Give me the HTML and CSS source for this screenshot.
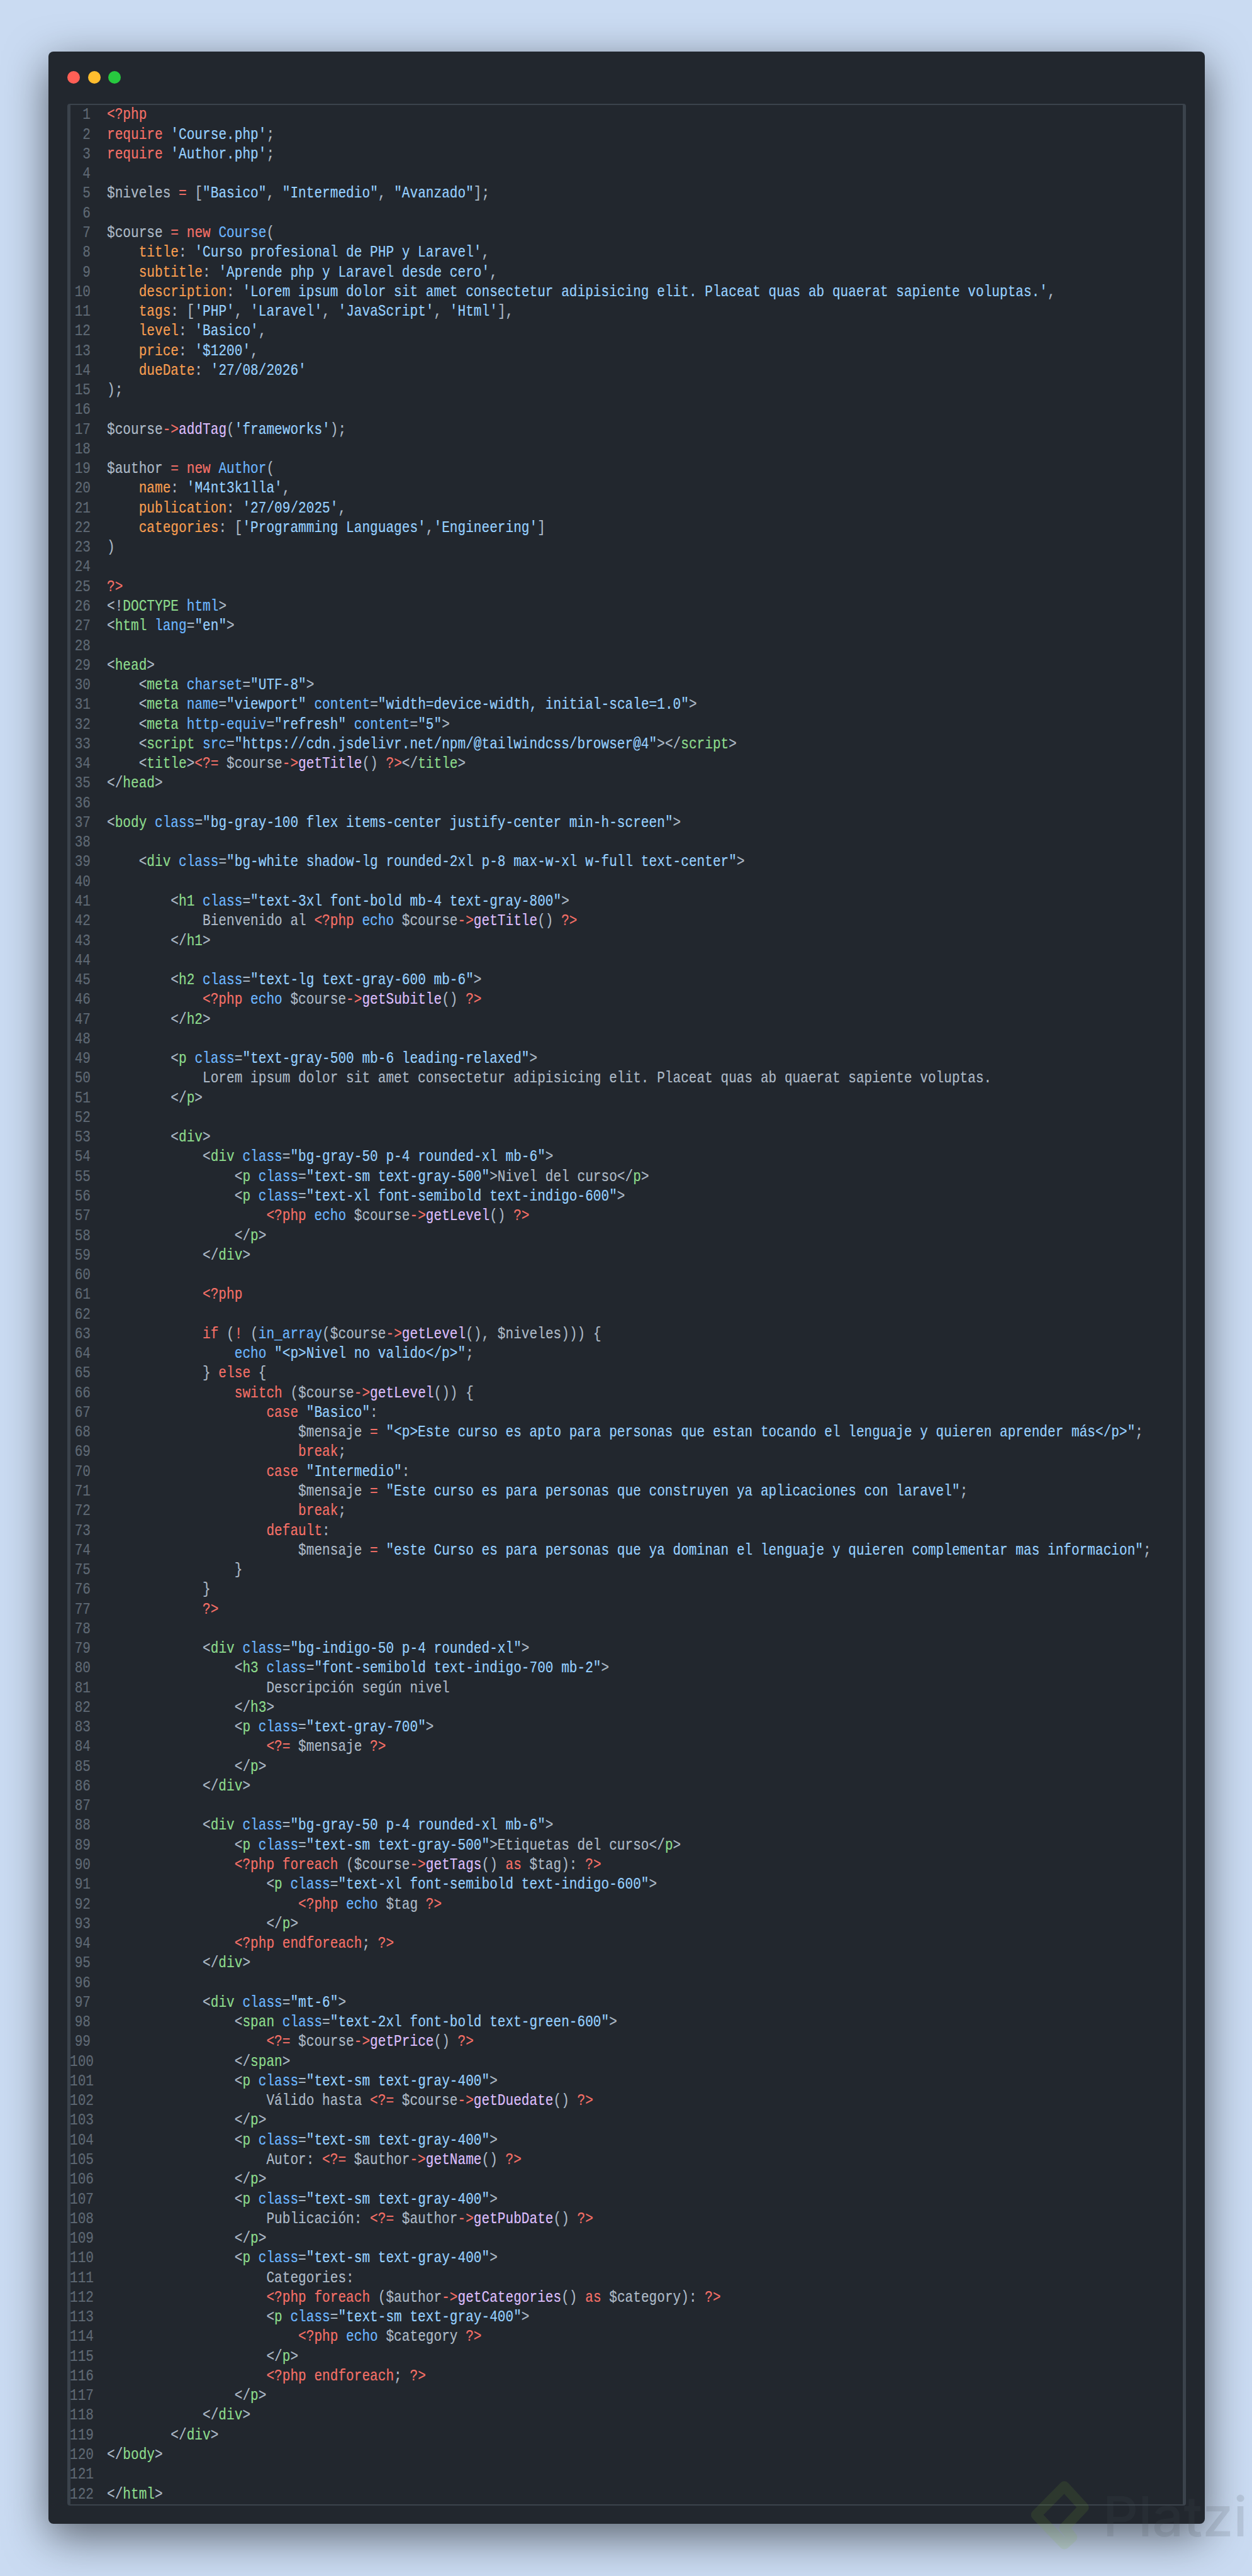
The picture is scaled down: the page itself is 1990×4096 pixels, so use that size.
FILE: index.html
```html
<!DOCTYPE html>
<html lang="es">
<head>
<meta charset="utf-8">
<title>Course PHP</title>
<link rel="stylesheet" href="styles.css">
</head>
<body>
<main class="window">
  <div class="controls"><span class="dot red"></span><span class="dot yellow"></span><span class="dot green"></span></div>
  <div class="editor">
<div class="line"><span class="num">1</span><span class="code"><b class="k">&lt;?php</b></span></div>
<div class="line"><span class="num">2</span><span class="code"><b class="k">require</b> <b class="s">'Course.php'</b>;</span></div>
<div class="line"><span class="num">3</span><span class="code"><b class="k">require</b> <b class="s">'Author.php'</b>;</span></div>
<div class="line"><span class="num">4</span><span class="code"></span></div>
<div class="line"><span class="num">5</span><span class="code">$niveles <b class="k">=</b> [<b class="s">"Basico"</b>, <b class="s">"Intermedio"</b>, <b class="s">"Avanzado"</b>];</span></div>
<div class="line"><span class="num">6</span><span class="code"></span></div>
<div class="line"><span class="num">7</span><span class="code">$course <b class="k">=</b> <b class="k">new</b> <b class="e">Course</b>(</span></div>
<div class="line"><span class="num">8</span><span class="code">    <b class="a">title</b>: <b class="s">'Curso profesional de PHP y Laravel'</b>,</span></div>
<div class="line"><span class="num">9</span><span class="code">    <b class="a">subtitle</b>: <b class="s">'Aprende php y Laravel desde cero'</b>,</span></div>
<div class="line"><span class="num">10</span><span class="code">    <b class="a">description</b>: <b class="s">'Lorem ipsum dolor sit amet consectetur adipisicing elit. Placeat quas ab quaerat sapiente voluptas.'</b>,</span></div>
<div class="line"><span class="num">11</span><span class="code">    <b class="a">tags</b>: [<b class="s">'PHP'</b>, <b class="s">'Laravel'</b>, <b class="s">'JavaScript'</b>, <b class="s">'Html'</b>],</span></div>
<div class="line"><span class="num">12</span><span class="code">    <b class="a">level</b>: <b class="s">'Basico'</b>,</span></div>
<div class="line"><span class="num">13</span><span class="code">    <b class="a">price</b>: <b class="s">'$1200'</b>,</span></div>
<div class="line"><span class="num">14</span><span class="code">    <b class="a">dueDate</b>: <b class="s">'27/08/2026'</b></span></div>
<div class="line"><span class="num">15</span><span class="code">);</span></div>
<div class="line"><span class="num">16</span><span class="code"></span></div>
<div class="line"><span class="num">17</span><span class="code">$course<b class="k">-&gt;</b><b class="f">addTag</b>(<b class="s">'frameworks'</b>);</span></div>
<div class="line"><span class="num">18</span><span class="code"></span></div>
<div class="line"><span class="num">19</span><span class="code">$author <b class="k">=</b> <b class="k">new</b> <b class="e">Author</b>(</span></div>
<div class="line"><span class="num">20</span><span class="code">    <b class="a">name</b>: <b class="s">'M4nt3k1lla'</b>,</span></div>
<div class="line"><span class="num">21</span><span class="code">    <b class="a">publication</b>: <b class="s">'27/09/2025'</b>,</span></div>
<div class="line"><span class="num">22</span><span class="code">    <b class="a">categories</b>: [<b class="s">'Programming Languages'</b>,<b class="s">'Engineering'</b>]</span></div>
<div class="line"><span class="num">23</span><span class="code">)</span></div>
<div class="line"><span class="num">24</span><span class="code"></span></div>
<div class="line"><span class="num">25</span><span class="code"><b class="k">?&gt;</b></span></div>
<div class="line"><span class="num">26</span><span class="code">&lt;!<b class="t">DOCTYPE</b> <b class="e">html</b>&gt;</span></div>
<div class="line"><span class="num">27</span><span class="code">&lt;<b class="t">html</b> <b class="e">lang</b>=<b class="s">"en"</b>&gt;</span></div>
<div class="line"><span class="num">28</span><span class="code"></span></div>
<div class="line"><span class="num">29</span><span class="code">&lt;<b class="t">head</b>&gt;</span></div>
<div class="line"><span class="num">30</span><span class="code">    &lt;<b class="t">meta</b> <b class="e">charset</b>=<b class="s">"UTF-8"</b>&gt;</span></div>
<div class="line"><span class="num">31</span><span class="code">    &lt;<b class="t">meta</b> <b class="e">name</b>=<b class="s">"viewport"</b> <b class="e">content</b>=<b class="s">"width=device-width, initial-scale=1.0"</b>&gt;</span></div>
<div class="line"><span class="num">32</span><span class="code">    &lt;<b class="t">meta</b> <b class="e">http-equiv</b>=<b class="s">"refresh"</b> <b class="e">content</b>=<b class="s">"5"</b>&gt;</span></div>
<div class="line"><span class="num">33</span><span class="code">    &lt;<b class="t">script</b> <b class="e">src</b>=<b class="s">"https://cdn.jsdelivr.net/npm/@tailwindcss/browser@4"</b>&gt;&lt;/<b class="t">script</b>&gt;</span></div>
<div class="line"><span class="num">34</span><span class="code">    &lt;<b class="t">title</b>&gt;<b class="k">&lt;?=</b> $course<b class="k">-&gt;</b><b class="f">getTitle</b>() <b class="k">?&gt;</b>&lt;/<b class="t">title</b>&gt;</span></div>
<div class="line"><span class="num">35</span><span class="code">&lt;/<b class="t">head</b>&gt;</span></div>
<div class="line"><span class="num">36</span><span class="code"></span></div>
<div class="line"><span class="num">37</span><span class="code">&lt;<b class="t">body</b> <b class="e">class</b>=<b class="s">"bg-gray-100 flex items-center justify-center min-h-screen"</b>&gt;</span></div>
<div class="line"><span class="num">38</span><span class="code"></span></div>
<div class="line"><span class="num">39</span><span class="code">    &lt;<b class="t">div</b> <b class="e">class</b>=<b class="s">"bg-white shadow-lg rounded-2xl p-8 max-w-xl w-full text-center"</b>&gt;</span></div>
<div class="line"><span class="num">40</span><span class="code"></span></div>
<div class="line"><span class="num">41</span><span class="code">        &lt;<b class="t">h1</b> <b class="e">class</b>=<b class="s">"text-3xl font-bold mb-4 text-gray-800"</b>&gt;</span></div>
<div class="line"><span class="num">42</span><span class="code">            Bienvenido al <b class="k">&lt;?php</b> <b class="e">echo</b> $course<b class="k">-&gt;</b><b class="f">getTitle</b>() <b class="k">?&gt;</b></span></div>
<div class="line"><span class="num">43</span><span class="code">        &lt;/<b class="t">h1</b>&gt;</span></div>
<div class="line"><span class="num">44</span><span class="code"></span></div>
<div class="line"><span class="num">45</span><span class="code">        &lt;<b class="t">h2</b> <b class="e">class</b>=<b class="s">"text-lg text-gray-600 mb-6"</b>&gt;</span></div>
<div class="line"><span class="num">46</span><span class="code">            <b class="k">&lt;?php</b> <b class="e">echo</b> $course<b class="k">-&gt;</b><b class="f">getSubitle</b>() <b class="k">?&gt;</b></span></div>
<div class="line"><span class="num">47</span><span class="code">        &lt;/<b class="t">h2</b>&gt;</span></div>
<div class="line"><span class="num">48</span><span class="code"></span></div>
<div class="line"><span class="num">49</span><span class="code">        &lt;<b class="t">p</b> <b class="e">class</b>=<b class="s">"text-gray-500 mb-6 leading-relaxed"</b>&gt;</span></div>
<div class="line"><span class="num">50</span><span class="code">            Lorem ipsum dolor sit amet consectetur adipisicing elit. Placeat quas ab quaerat sapiente voluptas.</span></div>
<div class="line"><span class="num">51</span><span class="code">        &lt;/<b class="t">p</b>&gt;</span></div>
<div class="line"><span class="num">52</span><span class="code"></span></div>
<div class="line"><span class="num">53</span><span class="code">        &lt;<b class="t">div</b>&gt;</span></div>
<div class="line"><span class="num">54</span><span class="code">            &lt;<b class="t">div</b> <b class="e">class</b>=<b class="s">"bg-gray-50 p-4 rounded-xl mb-6"</b>&gt;</span></div>
<div class="line"><span class="num">55</span><span class="code">                &lt;<b class="t">p</b> <b class="e">class</b>=<b class="s">"text-sm text-gray-500"</b>&gt;Nivel del curso&lt;/<b class="t">p</b>&gt;</span></div>
<div class="line"><span class="num">56</span><span class="code">                &lt;<b class="t">p</b> <b class="e">class</b>=<b class="s">"text-xl font-semibold text-indigo-600"</b>&gt;</span></div>
<div class="line"><span class="num">57</span><span class="code">                    <b class="k">&lt;?php</b> <b class="e">echo</b> $course<b class="k">-&gt;</b><b class="f">getLevel</b>() <b class="k">?&gt;</b></span></div>
<div class="line"><span class="num">58</span><span class="code">                &lt;/<b class="t">p</b>&gt;</span></div>
<div class="line"><span class="num">59</span><span class="code">            &lt;/<b class="t">div</b>&gt;</span></div>
<div class="line"><span class="num">60</span><span class="code"></span></div>
<div class="line"><span class="num">61</span><span class="code">            <b class="k">&lt;?php</b></span></div>
<div class="line"><span class="num">62</span><span class="code"></span></div>
<div class="line"><span class="num">63</span><span class="code">            <b class="k">if</b> (<b class="k">!</b> (<b class="e">in_array</b>($course<b class="k">-&gt;</b><b class="f">getLevel</b>(), $niveles))) {</span></div>
<div class="line"><span class="num">64</span><span class="code">                <b class="e">echo</b> <b class="s">"&lt;p&gt;Nivel no valido&lt;/p&gt;"</b>;</span></div>
<div class="line"><span class="num">65</span><span class="code">            } <b class="k">else</b> {</span></div>
<div class="line"><span class="num">66</span><span class="code">                <b class="k">switch</b> ($course<b class="k">-&gt;</b><b class="f">getLevel</b>()) {</span></div>
<div class="line"><span class="num">67</span><span class="code">                    <b class="k">case</b> <b class="s">"Basico"</b>:</span></div>
<div class="line"><span class="num">68</span><span class="code">                        $mensaje <b class="k">=</b> <b class="s">"&lt;p&gt;Este curso es apto para personas que estan tocando el lenguaje y quieren aprender más&lt;/p&gt;"</b>;</span></div>
<div class="line"><span class="num">69</span><span class="code">                        <b class="k">break</b>;</span></div>
<div class="line"><span class="num">70</span><span class="code">                    <b class="k">case</b> <b class="s">"Intermedio"</b>:</span></div>
<div class="line"><span class="num">71</span><span class="code">                        $mensaje <b class="k">=</b> <b class="s">"Este curso es para personas que construyen ya aplicaciones con laravel"</b>;</span></div>
<div class="line"><span class="num">72</span><span class="code">                        <b class="k">break</b>;</span></div>
<div class="line"><span class="num">73</span><span class="code">                    <b class="k">default</b>:</span></div>
<div class="line"><span class="num">74</span><span class="code">                        $mensaje <b class="k">=</b> <b class="s">"este Curso es para personas que ya dominan el lenguaje y quieren complementar mas informacion"</b>;</span></div>
<div class="line"><span class="num">75</span><span class="code">                }</span></div>
<div class="line"><span class="num">76</span><span class="code">            }</span></div>
<div class="line"><span class="num">77</span><span class="code">            <b class="k">?&gt;</b></span></div>
<div class="line"><span class="num">78</span><span class="code"></span></div>
<div class="line"><span class="num">79</span><span class="code">            &lt;<b class="t">div</b> <b class="e">class</b>=<b class="s">"bg-indigo-50 p-4 rounded-xl"</b>&gt;</span></div>
<div class="line"><span class="num">80</span><span class="code">                &lt;<b class="t">h3</b> <b class="e">class</b>=<b class="s">"font-semibold text-indigo-700 mb-2"</b>&gt;</span></div>
<div class="line"><span class="num">81</span><span class="code">                    Descripción según nivel</span></div>
<div class="line"><span class="num">82</span><span class="code">                &lt;/<b class="t">h3</b>&gt;</span></div>
<div class="line"><span class="num">83</span><span class="code">                &lt;<b class="t">p</b> <b class="e">class</b>=<b class="s">"text-gray-700"</b>&gt;</span></div>
<div class="line"><span class="num">84</span><span class="code">                    <b class="k">&lt;?=</b> $mensaje <b class="k">?&gt;</b></span></div>
<div class="line"><span class="num">85</span><span class="code">                &lt;/<b class="t">p</b>&gt;</span></div>
<div class="line"><span class="num">86</span><span class="code">            &lt;/<b class="t">div</b>&gt;</span></div>
<div class="line"><span class="num">87</span><span class="code"></span></div>
<div class="line"><span class="num">88</span><span class="code">            &lt;<b class="t">div</b> <b class="e">class</b>=<b class="s">"bg-gray-50 p-4 rounded-xl mb-6"</b>&gt;</span></div>
<div class="line"><span class="num">89</span><span class="code">                &lt;<b class="t">p</b> <b class="e">class</b>=<b class="s">"text-sm text-gray-500"</b>&gt;Etiquetas del curso&lt;/<b class="t">p</b>&gt;</span></div>
<div class="line"><span class="num">90</span><span class="code">                <b class="k">&lt;?php</b> <b class="k">foreach</b> ($course<b class="k">-&gt;</b><b class="f">getTags</b>() <b class="k">as</b> $tag): <b class="k">?&gt;</b></span></div>
<div class="line"><span class="num">91</span><span class="code">                    &lt;<b class="t">p</b> <b class="e">class</b>=<b class="s">"text-xl font-semibold text-indigo-600"</b>&gt;</span></div>
<div class="line"><span class="num">92</span><span class="code">                        <b class="k">&lt;?php</b> <b class="e">echo</b> $tag <b class="k">?&gt;</b></span></div>
<div class="line"><span class="num">93</span><span class="code">                    &lt;/<b class="t">p</b>&gt;</span></div>
<div class="line"><span class="num">94</span><span class="code">                <b class="k">&lt;?php</b> <b class="k">endforeach</b>; <b class="k">?&gt;</b></span></div>
<div class="line"><span class="num">95</span><span class="code">            &lt;/<b class="t">div</b>&gt;</span></div>
<div class="line"><span class="num">96</span><span class="code"></span></div>
<div class="line"><span class="num">97</span><span class="code">            &lt;<b class="t">div</b> <b class="e">class</b>=<b class="s">"mt-6"</b>&gt;</span></div>
<div class="line"><span class="num">98</span><span class="code">                &lt;<b class="t">span</b> <b class="e">class</b>=<b class="s">"text-2xl font-bold text-green-600"</b>&gt;</span></div>
<div class="line"><span class="num">99</span><span class="code">                    <b class="k">&lt;?=</b> $course<b class="k">-&gt;</b><b class="f">getPrice</b>() <b class="k">?&gt;</b></span></div>
<div class="line"><span class="num wide">100</span><span class="code">                &lt;/<b class="t">span</b>&gt;</span></div>
<div class="line"><span class="num wide">101</span><span class="code">                &lt;<b class="t">p</b> <b class="e">class</b>=<b class="s">"text-sm text-gray-400"</b>&gt;</span></div>
<div class="line"><span class="num wide">102</span><span class="code">                    Válido hasta <b class="k">&lt;?=</b> $course<b class="k">-&gt;</b><b class="f">getDuedate</b>() <b class="k">?&gt;</b></span></div>
<div class="line"><span class="num wide">103</span><span class="code">                &lt;/<b class="t">p</b>&gt;</span></div>
<div class="line"><span class="num wide">104</span><span class="code">                &lt;<b class="t">p</b> <b class="e">class</b>=<b class="s">"text-sm text-gray-400"</b>&gt;</span></div>
<div class="line"><span class="num wide">105</span><span class="code">                    Autor: <b class="k">&lt;?=</b> $author<b class="k">-&gt;</b><b class="f">getName</b>() <b class="k">?&gt;</b></span></div>
<div class="line"><span class="num wide">106</span><span class="code">                &lt;/<b class="t">p</b>&gt;</span></div>
<div class="line"><span class="num wide">107</span><span class="code">                &lt;<b class="t">p</b> <b class="e">class</b>=<b class="s">"text-sm text-gray-400"</b>&gt;</span></div>
<div class="line"><span class="num wide">108</span><span class="code">                    Publicación: <b class="k">&lt;?=</b> $author<b class="k">-&gt;</b><b class="f">getPubDate</b>() <b class="k">?&gt;</b></span></div>
<div class="line"><span class="num wide">109</span><span class="code">                &lt;/<b class="t">p</b>&gt;</span></div>
<div class="line"><span class="num wide">110</span><span class="code">                &lt;<b class="t">p</b> <b class="e">class</b>=<b class="s">"text-sm text-gray-400"</b>&gt;</span></div>
<div class="line"><span class="num wide">111</span><span class="code">                    Categories:</span></div>
<div class="line"><span class="num wide">112</span><span class="code">                    <b class="k">&lt;?php</b> <b class="k">foreach</b> ($author<b class="k">-&gt;</b><b class="f">getCategories</b>() <b class="k">as</b> $category): <b class="k">?&gt;</b></span></div>
<div class="line"><span class="num wide">113</span><span class="code">                    &lt;<b class="t">p</b> <b class="e">class</b>=<b class="s">"text-sm text-gray-400"</b>&gt;</span></div>
<div class="line"><span class="num wide">114</span><span class="code">                        <b class="k">&lt;?php</b> <b class="e">echo</b> $category <b class="k">?&gt;</b></span></div>
<div class="line"><span class="num wide">115</span><span class="code">                    &lt;/<b class="t">p</b>&gt;</span></div>
<div class="line"><span class="num wide">116</span><span class="code">                    <b class="k">&lt;?php</b> <b class="k">endforeach</b>; <b class="k">?&gt;</b></span></div>
<div class="line"><span class="num wide">117</span><span class="code">                &lt;/<b class="t">p</b>&gt;</span></div>
<div class="line"><span class="num wide">118</span><span class="code">            &lt;/<b class="t">div</b>&gt;</span></div>
<div class="line"><span class="num wide">119</span><span class="code">        &lt;/<b class="t">div</b>&gt;</span></div>
<div class="line"><span class="num wide">120</span><span class="code">&lt;/<b class="t">body</b>&gt;</span></div>
<div class="line"><span class="num wide">121</span><span class="code"></span></div>
<div class="line"><span class="num wide">122</span><span class="code">&lt;/<b class="t">html</b>&gt;</span></div>
  </div>
</main>
<aside class="watermark">
  <svg class="mark" viewBox="60 40 400 450" aria-hidden="true"><path d="M285 100 L397 222 L285 340 L330 395 L285 435 L122 265 Z"/></svg>
  <span class="brand">Platzi</span>
</aside>
</body>
</html>
```
FILE: styles.css
```css
html, body {
  margin: 0;
  padding: 0;
}

body {
  position: relative;
  width: 1990px;
  height: 4096px;
  box-sizing: border-box;
  padding: 82.3px 75px 0 76.5px;
  overflow: hidden;
  background: #cadbf2;
}

.window {
  box-sizing: border-box;
  height: 3930.6px;
  padding: 0 29.6px 29.6px 30.5px;
  border-radius: 8px;
  background: #22272e;
  box-shadow: 0 20px 68px rgba(0, 0, 0, 0.55);
  display: flex;
  flex-direction: column;
}

.controls {
  display: flex;
  gap: 12.5px;
  padding-top: 30.7px;
  height: 82.7px;
  box-sizing: border-box;
  flex: none;
}

.dot {
  width: 20px;
  height: 20px;
  border-radius: 50%;
}

.red { background: #ff5f56; }
.yellow { background: #ffbd2e; }
.green { background: #27c93f; }

.editor {
  flex: 1;
  box-sizing: border-box;
  border: 2px solid #3b434c;
  border-left-width: 5px;
  border-right-width: 5px;
  border-radius: 4px;
  padding-top: 0.4px;
  font-family: "Liberation Mono", monospace;
  font-size: 26px;
  line-height: 31.27px;
  color: #adbac7;
  -webkit-text-stroke: 0.2px;
}

.line {
  display: flex;
  height: 31.27px;
}

.num {
  flex: none;
  width: 32px;
  margin-right: 25.5px;
  text-align: right;
  color: #5f6974;
  display: block;
  white-space: nowrap;
  direction: rtl;
  transform: scaleX(0.812);
  transform-origin: right center;
}

.num.wide {
  width: 38px;
  margin-left: -1.2px;
  margin-right: 20.7px;
}

.code {
  flex: 1;
  min-width: 0;
  white-space: pre;
  transform: scaleX(0.812);
  transform-origin: left center;
}

.code b { font-weight: 400; }
.k { color: #f47067; }
.s { color: #96d0ff; }
.a { color: #f69d50; }
.f { color: #dcbdfb; }
.e { color: #6cb6ff; }
.t { color: #8ddb8c; }

.watermark {
  position: absolute;
  left: 1630px;
  top: 3937px;
  display: flex;
  align-items: flex-start;
  gap: 13px;
}

.mark {
  width: 109.7px;
  height: 123.5px;
  flex: none;
}

.mark path {
  fill: none;
  stroke: rgba(125, 175, 50, 0.13);
  stroke-width: 60;
  stroke-linejoin: round;
}

.brand {
  font-family: Inter, sans-serif;
  font-weight: 500;
  font-size: 88px;
  line-height: 1;
  margin-top: 20px;
  color: rgba(74, 78, 86, 0.15);
}
```
